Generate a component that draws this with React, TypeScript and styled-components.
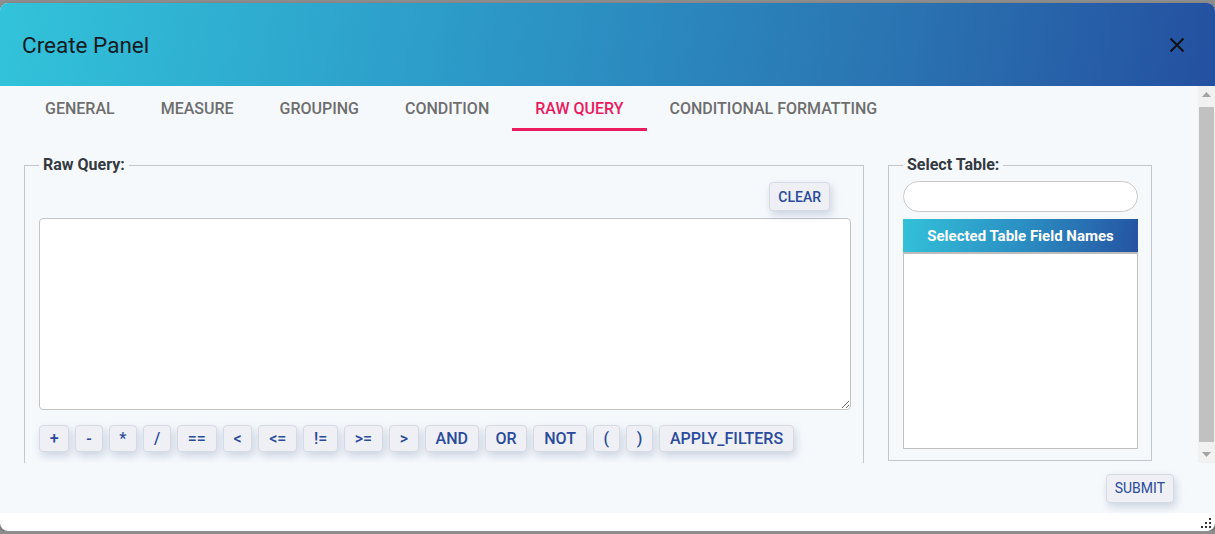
import React from "react";
import styled, { createGlobalStyle } from "styled-components";

const GlobalStyle = createGlobalStyle`
  html, body { margin: 0; padding: 0; }
  body {
    background: #8d8d8d;
    font-family: Roboto, "Noto Sans", "Liberation Sans", sans-serif;
    overflow: hidden;
  }
  * { box-sizing: border-box; }
`;

const Dialog = styled.div`
  margin-top: 3px;
  height: 528px;
  width: 1215px;
  background: #ffffff;
  border-radius: 8px;
  overflow: hidden;
  display: flex;
  flex-direction: column;
  box-shadow: 0 1px 3px rgba(0, 0, 0, 0.35);
`;

const Header = styled.header`
  height: 83px;
  flex: none;
  display: flex;
  align-items: center;
  justify-content: space-between;
  padding: 0 30px 0 22px;
  background: linear-gradient(100deg, #32c3da 0%, #2c98c7 40%, #2a72b1 75%, #2450a0 100%);
`;

const Title = styled.h1`
  margin: 0;
  font-size: 22.5px;
  font-weight: 400;
  color: #141a1f;
`;

const CloseButton = styled.button`
  border: none;
  background: transparent;
  padding: 0;
  width: 16px;
  height: 16px;
  display: flex;
  cursor: pointer;
`;

const Body = styled.div`
  height: 377px;
  flex: none;
  display: flex;
  background: #f6f9fc;
`;

const Scroller = styled.div`
  flex: 1;
  overflow: hidden;
`;

const Tabs = styled.nav`
  display: flex;
  padding-left: 22px;
  height: 45px;
`;

const Tab = styled.div<{ $active?: boolean }>`
  padding: 2px 23px 0;
  height: 45px;
  display: flex;
  align-items: center;
  font-size: 16px;
  font-weight: 500;
  color: ${(p) => (p.$active ? "#e91a5e" : "#6e6e6e")};
  border-bottom: 3px solid ${(p) => (p.$active ? "#e91a5e" : "transparent")};
`;

const Row = styled.div`
  display: flex;
  gap: 24px;
  padding-left: 24px;
  margin-top: 25px;
  align-items: flex-start;
`;

const Fieldset = styled.fieldset<{ $w: number; $pr: number }>`
  margin: 0;
  min-width: 0;
  width: ${(p) => p.$w}px;
  border: 1px solid #c4c7cc;
  padding: 7px ${(p) => p.$pr}px 11px 14px;
  flex: none;
`;

const Legend = styled.legend`
  padding: 0 4px;
  font-size: 16px;
  font-weight: 700;
  color: #343a40;
  line-height: 18px;
`;

const ClearRow = styled.div`
  display: flex;
  justify-content: flex-end;
  padding-right: 21px;
  margin-top: 1px;
`;

const Btn = styled.button<{ $size?: number; $weight?: number }>`
  height: 29px;
  padding: 0 8px;
  min-width: 27px;
  border: 1px solid #d6dae3;
  border-radius: 4px;
  background: #eef0f5;
  color: #2a4a9c;
  font-family: Roboto, "Liberation Sans", sans-serif;
  font-size: ${(p) => p.$size ?? 14}px;
  font-weight: ${(p) => p.$weight ?? 500};
  box-shadow: 2px 4px 8px rgba(60, 80, 130, 0.22);
  cursor: pointer;
  flex: none;
`;

const OpBtn = styled(Btn)`
  height: 27px;
  padding: 0 9.8px;
  font-size: 16px;
`;

const QueryArea = styled.textarea`
  display: block;
  width: 100%;
  height: 192px;
  margin-top: 7px;
  border: 1px solid #c4c4c4;
  border-radius: 4px;
  background: #ffffff;
  resize: both;
  font-family: Roboto, sans-serif;
  font-size: 14px;
  outline: none;
`;

const OpRow = styled.div`
  display: flex;
  gap: 6px;
  margin-top: 15px;
  padding-bottom: 20px;
`;

const Search = styled.input`
  display: block;
  width: 100%;
  height: 31px;
  margin: 0;
  border: 1px solid #c8c8c8;
  border-radius: 16px;
  background: #ffffff;
  outline: none;
  padding: 0 12px;
`;

const ListHeader = styled.div`
  margin-top: 7px;
  height: 33px;
  display: flex;
  align-items: center;
  justify-content: center;
  background: linear-gradient(100deg, #33c1d9 0%, #2b8fc3 50%, #2553a2 100%);
  color: #ffffff;
  font-size: 15px;
  font-weight: 700;
`;

const ListBox = styled.div`
  height: 197px;
  background: #ffffff;
  border: 1px solid #bfbfbf;
  border-top: 2px solid #bcbcbc;
`;

const ScrollBar = styled.div`
  width: 17px;
  flex: none;
  background: #f1f1f1;
  display: flex;
  flex-direction: column;
`;

const ScrollArrow = styled.div`
  height: 17px;
  flex: none;
  display: flex;
  align-items: center;
  justify-content: center;
`;

const ScrollTrack = styled.div`
  flex: 1;
  padding: 4px 2px 0;
`;

const Thumb = styled.div`
  height: 335px;
  background: #c1c1c1;
  margin: 0 -1px;
`;

const Footer = styled.footer`
  height: 50px;
  flex: none;
  background: #f6f9fc;
  display: flex;
  align-items: center;
  justify-content: flex-end;
  padding-right: 41px;
`;

const BottomStrip = styled.div`
  flex: 1;
  display: flex;
  justify-content: flex-end;
  align-items: flex-end;
  padding: 0 3px 2px 0;
`;

const Arrow = ({ up }: { up?: boolean }) => (
  <svg width="9" height="5" viewBox="0 0 9 5">
    <polygon points={up ? "0,5 9,5 4.5,0" : "0,0 9,0 4.5,5"} fill="#a3a3a3" />
  </svg>
);

const ops = ["+", "-", "*", "/", "==", "<", "<=", "!=", ">=", ">", "AND", "OR", "NOT", "(", ")", "APPLY_FILTERS"];
const tabs = ["GENERAL", "MEASURE", "GROUPING", "CONDITION", "RAW QUERY", "CONDITIONAL FORMATTING"];

export default function App() {
  return (
    <>
      <GlobalStyle />
      <Dialog>
        <Header>
          <Title>Create Panel</Title>
          <CloseButton aria-label="close">
            <svg width="16" height="16" viewBox="0 0 16 16">
              <path d="M1.5 1.5 L14.5 14.5 M14.5 1.5 L1.5 14.5" stroke="#111" strokeWidth="2" />
            </svg>
          </CloseButton>
        </Header>
        <Body>
          <Scroller>
            <Tabs>
              {tabs.map((t) => (
                <Tab key={t} $active={t === "RAW QUERY"}>
                  {t}
                </Tab>
              ))}
            </Tabs>
            <Row>
              <Fieldset $w={840} $pr={12}>
                <Legend>Raw Query:</Legend>
                <ClearRow>
                  <Btn>CLEAR</Btn>
                </ClearRow>
                <QueryArea />
                <OpRow>
                  {ops.map((o) => (
                    <OpBtn key={o}>{o}</OpBtn>
                  ))}
                </OpRow>
              </Fieldset>
              <Fieldset $w={264} $pr={13}>
                <Legend>Select Table:</Legend>
                <Search />
                <ListHeader>Selected Table Field Names</ListHeader>
                <ListBox />
              </Fieldset>
            </Row>
          </Scroller>
          <ScrollBar>
            <ScrollArrow>
              <Arrow up />
            </ScrollArrow>
            <ScrollTrack>
              <Thumb />
            </ScrollTrack>
            <ScrollArrow>
              <Arrow />
            </ScrollArrow>
          </ScrollBar>
        </Body>
        <Footer>
          <Btn $size={14} $weight={400}>SUBMIT</Btn>
        </Footer>
        <BottomStrip>
          <svg width="12" height="12" viewBox="0 0 12 12">
            <rect x="9" y="1" width="2" height="2" fill="#333" />
            <rect x="5" y="5" width="2" height="2" fill="#333" />
            <rect x="9" y="5" width="2" height="2" fill="#333" />
            <rect x="1" y="9" width="2" height="2" fill="#333" />
            <rect x="5" y="9" width="2" height="2" fill="#333" />
            <rect x="9" y="9" width="2" height="2" fill="#333" />
          </svg>
        </BottomStrip>
      </Dialog>
    </>
  );
}
